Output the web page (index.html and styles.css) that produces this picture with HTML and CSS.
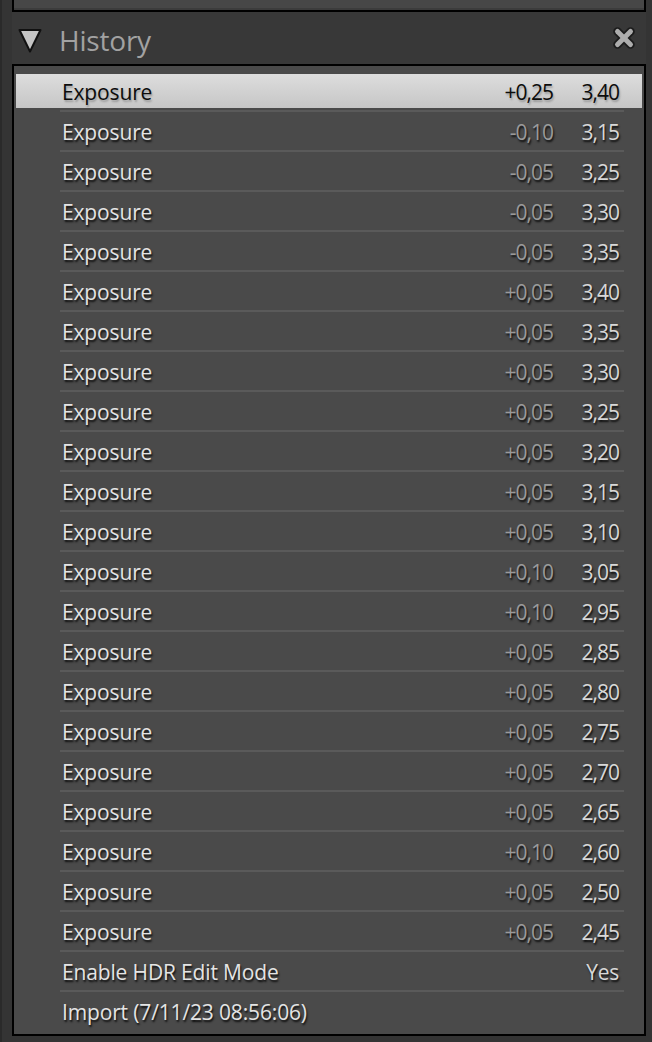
FILE: index.html
```html
<!DOCTYPE html>
<html lang="en">
<head>
<meta charset="utf-8">
<title>History</title>
<link rel="stylesheet" href="styles.css">
</head>
<body>
<div class="app">
  <div class="top-panel"></div>
  <div class="header">
    <svg class="tri" width="24" height="26" viewBox="0 0 24 26"><polygon points="1.5,3 22.5,3 12,24.5" fill="#c4c4c4" stroke="#111" stroke-width="2" stroke-linejoin="round"/></svg>
    <span class="title">History</span>
    <svg class="close" width="22" height="22" viewBox="0 0 22 22">
      <g stroke-linecap="round">
        <line x1="4.5" y1="4.5" x2="17.5" y2="17.5" stroke="#1c1c1c" stroke-width="8.5"/>
        <line x1="17.5" y1="4.5" x2="4.5" y2="17.5" stroke="#1c1c1c" stroke-width="8.5"/>
        <line x1="4.5" y1="4.5" x2="17.5" y2="17.5" stroke="#adadad" stroke-width="5"/>
        <line x1="17.5" y1="4.5" x2="4.5" y2="17.5" stroke="#adadad" stroke-width="5"/>
      </g>
    </svg>
  </div>
  <div class="list">
    <div class="row sel"><div class="body"><span class="label">Exposure</span><span class="delta">+0,25</span><span class="value">3,40</span></div><div class="sep"></div></div>
    <div class="row"><div class="body"><span class="label">Exposure</span><span class="delta">-0,10</span><span class="value">3,15</span></div><div class="sep"></div></div>
    <div class="row"><div class="body"><span class="label">Exposure</span><span class="delta">-0,05</span><span class="value">3,25</span></div><div class="sep"></div></div>
    <div class="row"><div class="body"><span class="label">Exposure</span><span class="delta">-0,05</span><span class="value">3,30</span></div><div class="sep"></div></div>
    <div class="row"><div class="body"><span class="label">Exposure</span><span class="delta">-0,05</span><span class="value">3,35</span></div><div class="sep"></div></div>
    <div class="row"><div class="body"><span class="label">Exposure</span><span class="delta">+0,05</span><span class="value">3,40</span></div><div class="sep"></div></div>
    <div class="row"><div class="body"><span class="label">Exposure</span><span class="delta">+0,05</span><span class="value">3,35</span></div><div class="sep"></div></div>
    <div class="row"><div class="body"><span class="label">Exposure</span><span class="delta">+0,05</span><span class="value">3,30</span></div><div class="sep"></div></div>
    <div class="row"><div class="body"><span class="label">Exposure</span><span class="delta">+0,05</span><span class="value">3,25</span></div><div class="sep"></div></div>
    <div class="row"><div class="body"><span class="label">Exposure</span><span class="delta">+0,05</span><span class="value">3,20</span></div><div class="sep"></div></div>
    <div class="row"><div class="body"><span class="label">Exposure</span><span class="delta">+0,05</span><span class="value">3,15</span></div><div class="sep"></div></div>
    <div class="row"><div class="body"><span class="label">Exposure</span><span class="delta">+0,05</span><span class="value">3,10</span></div><div class="sep"></div></div>
    <div class="row"><div class="body"><span class="label">Exposure</span><span class="delta">+0,10</span><span class="value">3,05</span></div><div class="sep"></div></div>
    <div class="row"><div class="body"><span class="label">Exposure</span><span class="delta">+0,10</span><span class="value">2,95</span></div><div class="sep"></div></div>
    <div class="row"><div class="body"><span class="label">Exposure</span><span class="delta">+0,05</span><span class="value">2,85</span></div><div class="sep"></div></div>
    <div class="row"><div class="body"><span class="label">Exposure</span><span class="delta">+0,05</span><span class="value">2,80</span></div><div class="sep"></div></div>
    <div class="row"><div class="body"><span class="label">Exposure</span><span class="delta">+0,05</span><span class="value">2,75</span></div><div class="sep"></div></div>
    <div class="row"><div class="body"><span class="label">Exposure</span><span class="delta">+0,05</span><span class="value">2,70</span></div><div class="sep"></div></div>
    <div class="row"><div class="body"><span class="label">Exposure</span><span class="delta">+0,05</span><span class="value">2,65</span></div><div class="sep"></div></div>
    <div class="row"><div class="body"><span class="label">Exposure</span><span class="delta">+0,10</span><span class="value">2,60</span></div><div class="sep"></div></div>
    <div class="row"><div class="body"><span class="label">Exposure</span><span class="delta">+0,05</span><span class="value">2,50</span></div><div class="sep"></div></div>
    <div class="row"><div class="body"><span class="label">Exposure</span><span class="delta">+0,05</span><span class="value">2,45</span></div><div class="sep"></div></div>
    <div class="row"><div class="body"><span class="label">Enable HDR Edit Mode</span><span class="value text">Yes</span></div><div class="sep"></div></div>
    <div class="row last"><div class="body"><span class="label">Import (7/11/23 08:56:06)</span></div></div>
  </div>
</div>
</body>
</html>
```

FILE: styles.css
```css
html, body {
  margin: 0;
  padding: 0;
  background: #343434;
}
body {
  width: 652px;
  height: 1042px;
  overflow: hidden;
  font-family: "Open Sans", "Noto Sans", sans-serif;
}
.app {
  border-left: 2px solid #2a2a2a;
  padding: 0 6px 0 10px;
  height: 1042px;
  box-sizing: border-box;
}
.top-panel {
  height: 10px;
  background: #474747;
  border: 2px solid #000;
  border-top: none;
  box-shadow: inset 0 -2px 0 #3c3c3c;
}
.header {
  height: 52px;
  box-sizing: border-box;
  display: flex;
  align-items: center;
  padding: 4px 11px 0 6px;
  background: #383838;
}
.tri {
  display: block;
  flex: none;
  margin-right: 17px;
}
.title {
  flex: 1;
  font-size: 28px;
  color: #a2a2a2;
  letter-spacing: -0.2px;
  line-height: 38px;
}
.close {
  display: block;
  flex: none;
  margin-top: -4px;
}
.list {
  border: 2px solid #000;
  background: #4a4a4a;
  padding: 6px 0 2px;
  height: 972px;
  box-sizing: border-box;
}
.row {
  padding: 2px 2px 0;
  height: 40px;
  box-sizing: border-box;
}
.body {
  height: 34px;
  box-sizing: border-box;
  display: flex;
  align-items: center;
  padding: 2px 23px 0 46px;
  font-size: 21px;
  color: #e4e4e4;
  text-shadow: 1px 2px 2px rgba(0, 0, 0, 0.85);
  white-space: nowrap;
}
.label {
  flex: 1;
  letter-spacing: -0.15px;
}
.delta {
  color: #9a9a9a;
  letter-spacing: -1px;
}
.value {
  width: 66px;
  text-align: right;
  color: #d8d8d8;
  letter-spacing: -1px;
}
.value.text {
  letter-spacing: -0.3px;
}
.sep {
  height: 2px;
  margin: 2px 18px 0 44px;
  background: #5a5a5a;
}
.sel .body {
  background: linear-gradient(#dddddd, #c6c6c6);
  color: #0c0c0c;
  text-shadow: 1px 2px 2px rgba(0, 0, 0, 0.25);
}
.sel .delta,
.sel .value {
  color: #0c0c0c;
}
```
